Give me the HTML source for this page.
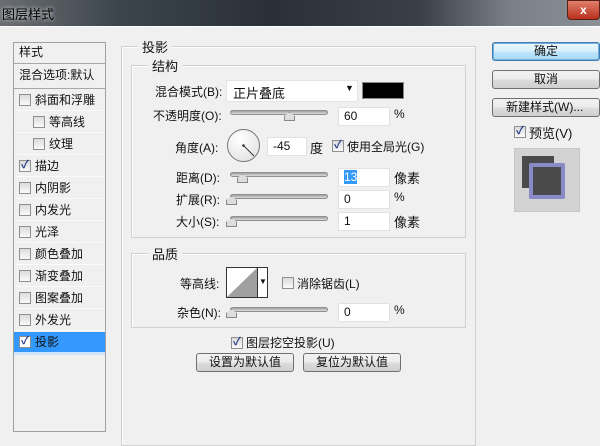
<!DOCTYPE html><html><head><meta charset="utf-8"><style>
*{margin:0;padding:0;box-sizing:border-box}
body{width:600px;height:430px;overflow:hidden;background:#f0f0f0;font-family:"Liberation Sans","Noto Sans CJK SC",sans-serif;font-size:12px;color:#111;position:relative}
.a{position:absolute;white-space:nowrap}
.tb{left:0;top:0;width:600px;height:27px;background:linear-gradient(90deg,#6a6e72 0%,#3c444c 20%,#2a3038 45%,#3a4048 70%,#7a8088 85%,#8a9096 100%)}
.cb{border:1px solid #8e8f8f;width:12px;height:12px;background:linear-gradient(#dcdcdc,#fafafa)}
.ck::after{content:"✓";position:absolute;left:1px;top:-2px;font-size:11px;line-height:12px;color:#2a3a8a;font-weight:bold}
.grp{border:1px solid #d0d0d0;box-shadow:1px 1px 0 #fff inset}
.lg{background:#f0f0f0;padding:0 4px}
.in{background:#fff;border:1px solid #e2e2e2;height:19px;padding:1px 5px;font-size:12px}
.sl{height:5px;border:1px solid #909090;border-radius:3px;background:linear-gradient(#a0a0a0,#dcdcdc)}
.th{width:11px;height:9px;background:#ddd;border:1px solid #888;clip-path:polygon(50% 0,100% 45%,100% 100%,0 100%,0 45%)}
.btn{border:1px solid #707070;border-radius:3px;background:linear-gradient(#f2f2f2 0%,#ebebeb 50%,#dddddd 51%,#cfcfcf 100%);text-align:center;font-size:12px;line-height:17px}
.it{left:14px;width:91px;height:22px;border-bottom:1px solid #fafafa;line-height:22px}
</style></head><body>
<div class="a tb"></div>
<div class="a" style="left:2px;top:4px;color:#000;font-size:13px;text-shadow:0 0 4px #fff">图层样式</div>
<div class="a" style="left:567px;top:0;width:33px;height:20px;background:linear-gradient(#e0806c,#b8301c);border:1px solid #5a2018;border-radius:0 0 4px 4px;color:#fff;font-weight:bold;text-align:center;line-height:18px">x</div>
<div class="a" style="left:0;top:26px;width:600px;height:1px;background:#fff"></div>

<div class="a" style="left:13px;top:42px;width:93px;height:390px;border:1px solid #a0a0a0;background:#f0f0f0"></div>
<div class="a" style="left:14px;top:43px;width:91px;height:21px;border-bottom:1px solid #a8a8a8;padding-left:5px;line-height:19px">样式</div>
<div class="a" style="left:14px;top:65px;width:91px;height:24px;border-bottom:1px solid #a8a8a8;padding-left:5px;line-height:20px;overflow:hidden">混合选项:默认</div>
<div class="a it" style="top:89px"><span class="a cb" style="left:5px;top:5px"></span><span class="a" style="left:21px">斜面和浮雕</span></div>
<div class="a it" style="top:111px"><span class="a cb" style="left:19px;top:5px"></span><span class="a" style="left:35px">等高线</span></div>
<div class="a it" style="top:133px"><span class="a cb" style="left:19px;top:5px"></span><span class="a" style="left:35px">纹理</span></div>
<div class="a it" style="top:155px"><span class="a cb ck" style="left:5px;top:5px"></span><span class="a" style="left:21px">描边</span></div>
<div class="a it" style="top:177px"><span class="a cb" style="left:5px;top:5px"></span><span class="a" style="left:21px">内阴影</span></div>
<div class="a it" style="top:199px"><span class="a cb" style="left:5px;top:5px"></span><span class="a" style="left:21px">内发光</span></div>
<div class="a it" style="top:221px"><span class="a cb" style="left:5px;top:5px"></span><span class="a" style="left:21px">光泽</span></div>
<div class="a it" style="top:243px"><span class="a cb" style="left:5px;top:5px"></span><span class="a" style="left:21px">颜色叠加</span></div>
<div class="a it" style="top:265px"><span class="a cb" style="left:5px;top:5px"></span><span class="a" style="left:21px">渐变叠加</span></div>
<div class="a it" style="top:287px"><span class="a cb" style="left:5px;top:5px"></span><span class="a" style="left:21px">图案叠加</span></div>
<div class="a it" style="top:309px"><span class="a cb" style="left:5px;top:5px"></span><span class="a" style="left:21px">外发光</span></div>
<div class="a it" style="top:332px;background:#3399ff;border-bottom:3px solid #cfe4fa;height:23px"><span class="a cb ck" style="left:5px;top:4px;background:#fff"></span><span class="a" style="left:21px;top:-1px">投影</span></div>

<div class="a grp" style="left:121px;top:46px;width:355px;height:400px"></div>
<div class="a lg" style="left:138px;top:37px;font-size:13px">投影</div>
<div class="a grp" style="left:131px;top:65px;width:335px;height:173px"></div>
<div class="a lg" style="left:148px;top:56px;font-size:13px">结构</div>

<div class="a" style="left:155px;top:83px">混合模式(B):</div>
<div class="a" style="left:226px;top:80px;width:132px;height:22px;background:#fff;border:1px solid #e4e4e4;padding:2px 6px;font-size:13px">正片叠底<span class="a" style="left:118px;top:2px;font-size:9px">▼</span></div>
<div class="a" style="left:362px;top:82px;width:42px;height:17px;background:#000;border:1px solid #888"></div>

<div class="a" style="left:153px;top:107px">不透明度(O):</div>
<div class="a sl" style="left:230px;top:110px;width:98px"></div>
<div class="a th" style="left:284px;top:112px"></div>
<div class="a in" style="left:338px;top:107px;width:52px">60</div>
<div class="a" style="left:394px;top:107px">%</div>

<div class="a" style="left:175px;top:139px">角度(A):</div>
<div class="a" style="left:227px;top:129px;width:33px;height:33px;border-radius:50%;border:1px solid #777;background:radial-gradient(circle at 40% 30%,#fff,#ddd)"></div>
<svg class="a" style="left:227px;top:129px" width="34" height="34"><line x1="16.5" y1="16.5" x2="27" y2="27" stroke="#333" stroke-width="1"/><circle cx="16.5" cy="16.5" r="1.3" fill="#333"/></svg>
<div class="a in" style="left:267px;top:137px;width:40px">-45</div>
<div class="a" style="left:310px;top:138px;font-size:13px">度</div>
<div class="a cb ck" style="left:332px;top:140px"></div>
<div class="a" style="left:347px;top:138px;font-size:12px">使用全局光(G)</div>

<div class="a" style="left:176px;top:169px">距离(D):</div>
<div class="a sl" style="left:230px;top:172px;width:98px"></div>
<div class="a th" style="left:237px;top:174px"></div>
<div class="a in" style="left:338px;top:168px;width:52px"><span style="background:#3399ff;color:#fff">13</span></div>
<div class="a" style="left:394px;top:168px;font-size:13px">像素</div>

<div class="a" style="left:176px;top:191px">扩展(R):</div>
<div class="a sl" style="left:230px;top:194px;width:98px"></div>
<div class="a th" style="left:226px;top:196px"></div>
<div class="a in" style="left:338px;top:190px;width:52px">0</div>
<div class="a" style="left:394px;top:190px">%</div>

<div class="a" style="left:176px;top:213px">大小(S):</div>
<div class="a sl" style="left:230px;top:216px;width:98px"></div>
<div class="a th" style="left:226px;top:218px"></div>
<div class="a in" style="left:338px;top:212px;width:52px">1</div>
<div class="a" style="left:394px;top:212px;font-size:13px">像素</div>

<div class="a grp" style="left:131px;top:253px;width:335px;height:75px"></div>
<div class="a lg" style="left:148px;top:244px;font-size:13px">品质</div>
<div class="a" style="left:180px;top:275px">等高线:</div>
<div class="a" style="left:226px;top:267px;width:42px;height:31px;border:1px solid #333;background:#fff"></div>
<svg class="a" style="left:227px;top:268px" width="30" height="29"><polygon points="0,29 30,0 30,29" fill="#a0a0a0"/></svg>
<div class="a" style="left:257px;top:268px;width:1px;height:29px;background:#333"></div>
<div class="a" style="left:259px;top:277px;font-size:8px">▼</div>
<div class="a cb" style="left:282px;top:277px"></div>
<div class="a" style="left:297px;top:275px">消除锯齿(L)</div>
<div class="a" style="left:177px;top:304px">杂色(N):</div>
<div class="a sl" style="left:230px;top:307px;width:98px"></div>
<div class="a th" style="left:226px;top:309px"></div>
<div class="a in" style="left:338px;top:303px;width:52px">0</div>
<div class="a" style="left:394px;top:303px">%</div>

<div class="a cb ck" style="left:231px;top:337px"></div>
<div class="a" style="left:246px;top:334px">图层挖空投影(U)</div>
<div class="a btn" style="left:196px;top:353px;width:98px;height:19px">设置为默认值</div>
<div class="a btn" style="left:303px;top:353px;width:98px;height:19px">复位为默认值</div>

<div class="a btn" style="left:492px;top:42px;width:108px;height:19px;border-color:#3c7fb1;background:linear-gradient(#eaf6fd 0%,#d9f0fc 50%,#bee6fd 51%,#a7d9f5 100%);box-shadow:0 0 0 1px #7ad inset">确定</div>
<div class="a btn" style="left:492px;top:70px;width:108px;height:19px">取消</div>
<div class="a btn" style="left:492px;top:98px;width:108px;height:19px;text-align:left;padding-left:13px">新建样式(W)...</div>
<div class="a cb ck" style="left:514px;top:126px"></div>
<div class="a" style="left:529px;top:123px;font-size:13px">预览(V)</div>
<div class="a" style="left:514px;top:148px;width:66px;height:64px;background:#d2d2d2;border:1px solid #c6c6c6"></div>
<div class="a" style="left:522px;top:156px;width:32px;height:32px;background:#4a4a4a"></div>
<div class="a" style="left:529px;top:163px;width:36px;height:36px;background:#4a4a4a;border:4px solid #8a8ac8;border-radius:2px"></div>
</body></html>
